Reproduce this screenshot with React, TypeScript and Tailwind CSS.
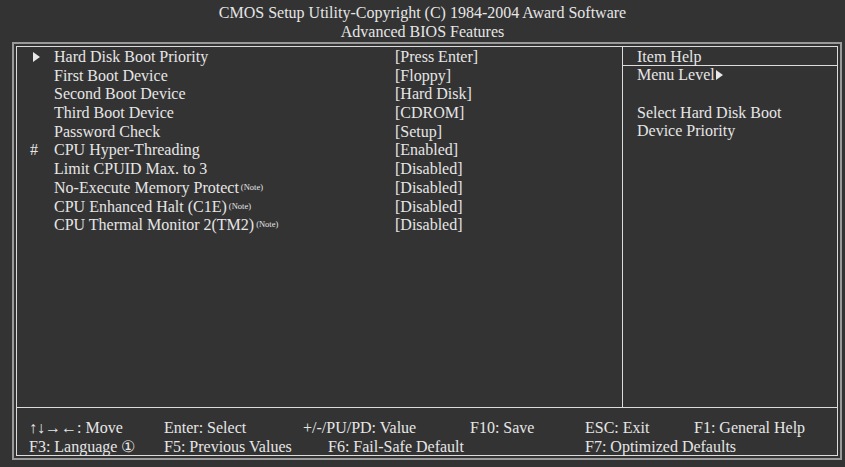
import React from "react";

const Tri = ({ className = "" }: { className?: string }) => (
  <svg width="7" height="10" viewBox="0 0 7 10" className={className}>
    <polygon points="0,0 7,5 0,10" fill="#e8e8e8" />
  </svg>
);

type Row = { mark?: "tri" | "hash"; label: string; note?: boolean; value: string };

const rows: Row[] = [
  { mark: "tri", label: "Hard Disk Boot Priority", value: "[Press Enter]" },
  { label: "First Boot Device", value: "[Floppy]" },
  { label: "Second Boot Device", value: "[Hard Disk]" },
  { label: "Third Boot Device", value: "[CDROM]" },
  { label: "Password Check", value: "[Setup]" },
  { mark: "hash", label: "CPU Hyper-Threading", value: "[Enabled]" },
  { label: "Limit CPUID Max. to 3", value: "[Disabled]" },
  { label: "No-Execute Memory Protect", note: true, value: "[Disabled]" },
  { label: "CPU Enhanced Halt (C1E)", note: true, value: "[Disabled]" },
  { label: "CPU Thermal Monitor 2(TM2)", note: true, value: "[Disabled]" },
];

export default function App() {
  return (
    <div className="w-[845px] h-[467px] bg-[#333333] text-[#e6e6e6] font-['Liberation_Serif',serif] text-[16px] overflow-hidden">
      <div className="h-[42px] pt-[3px] text-center leading-[19px]">
        <div>CMOS Setup Utility-Copyright (C) 1984-2004 Award Software</div>
        <div>Advanced BIOS Features</div>
      </div>
      <div className="ml-[12px] mr-[3px] border-2 border-[#9a9a9a] p-[2px]">
        <div className="border border-[#dcdcdc] flex flex-col">
          <div className="h-[361px] border-b border-[#dcdcdc] flex">
            <div className="w-[606px] border-r border-[#dcdcdc] pt-[1px] pl-[13px] leading-[18.7px]">
              {rows.map((r, i) => (
                <div key={i} className="flex h-[18.7px] items-center">
                  <div className="w-[24px] flex items-center">
                    {r.mark === "tri" && <Tri className="ml-[3px]" />}
                    {r.mark === "hash" && <span>#</span>}
                  </div>
                  <div className="w-[341px] whitespace-nowrap">
                    {r.label}
                    {r.note && (
                      <sup className="text-[8.5px] ml-[2px] relative -top-[3px]">(Note)</sup>
                    )}
                  </div>
                  <div className="whitespace-nowrap">{r.value}</div>
                </div>
              ))}
            </div>
            <div className="flex-1 pt-[1px] leading-[18.7px]">
              <div className="h-[17.5px] border-b border-[#dcdcdc] pl-[14px]">Item Help</div>
              <div className="pl-[14px] flex items-center h-[19.5px]">
                Menu Level
                <Tri className="ml-[1px]" />
              </div>
              <div className="h-[18.7px]" />
              <div className="pl-[14px]">Select Hard Disk Boot</div>
              <div className="pl-[14px]">Device Priority</div>
            </div>
          </div>
          <div className="h-[47px] pt-[10px] pl-[12px] leading-[19px] whitespace-nowrap">
            <div className="flex">
              <span className="w-[135px]">↑↓→←: Move</span>
              <span className="w-[139px]">Enter: Select</span>
              <span className="w-[167px]">+/-/PU/PD: Value</span>
              <span className="w-[115px]">F10: Save</span>
              <span className="w-[109px]">ESC: Exit</span>
              <span>F1: General Help</span>
            </div>
            <div className="flex">
              <span className="w-[135px]">F3: Language ①</span>
              <span className="w-[164px]">F5: Previous Values</span>
              <span className="w-[257px]">F6: Fail-Safe Default</span>
              <span>F7: Optimized Defaults</span>
            </div>
          </div>
        </div>
      </div>
    </div>
  );
}
